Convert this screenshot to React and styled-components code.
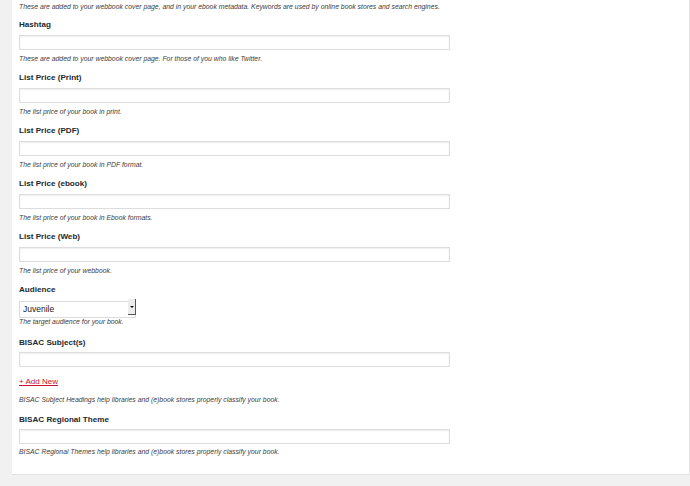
import React from "react";
import styled, { createGlobalStyle } from "styled-components";

const font = `"Liberation Sans", Arial, Helvetica, sans-serif`;

const Global = createGlobalStyle`
  html, body {
    margin: 0;
    padding: 0;
    background: #f1f1f1;
  }
  body {
    font-family: ${font};
    color: #23282d;
  }
`;

const Panel = styled.div`
  box-sizing: border-box;
  width: 678px;
  margin-left: 12px;
  padding: 2px 7px 17px;
  background: #fff;
  border-right: 1px solid #e3e3e3;
  border-bottom: 1px solid #e3e3e3;
`;

const Field = styled.div`
  display: flex;
  flex-direction: column;
  align-items: flex-start;
  margin-top: ${(p) => p.$gap || 7}px;
`;

const Label = styled.label`
  display: block;
  font-size: 8.1px;
  font-weight: bold;
  line-height: 12px;
  color: #23282d;
`;

const TextInput = styled.input`
  box-sizing: border-box;
  display: block;
  width: 431px;
  height: 15px;
  margin: ${(p) => p.$top || 4}px 0 0;
  padding: 0 4px;
  border: 1px solid #ddd;
  box-shadow: inset 0 1px 2px rgba(0, 0, 0, 0.07);
  background: #fff;
  font-family: ${font};
  font-size: 8px;
`;

const Desc = styled.p`
  margin: ${(p) => p.$top ?? 4}px 0 0;
  font-size: 6.85px;
  font-style: italic;
  line-height: 10px;
  color: #3c3c3c;
`;

const SelectWrap = styled.div`
  position: relative;
  margin-top: 2px;
  width: 117px;
  height: 17px;
`;

const Select = styled.select`
  box-sizing: border-box;
  appearance: none;
  width: 100%;
  height: 100%;
  margin: 0;
  padding: 0 0 0 3px;
  border: 1px solid #ddd;
  border-radius: 0;
  background: #fff;
  font-family: ${font};
  font-size: 8.5px;
  color: #222;
  outline: none;
`;

const DropButton = styled.span`
  position: absolute;
  top: 1px;
  right: 0;
  box-sizing: border-box;
  width: 8px;
  height: 16px;
  background: #ececec;
  border-right: 1px solid #555;
  border-bottom: 1px solid #555;
  display: flex;
  align-items: center;
  justify-content: center;
  pointer-events: none;

  &::after {
    content: "";
    border-left: 2px solid transparent;
    border-right: 2px solid transparent;
    border-top: 2px solid #111;
  }
`;

const AddLink = styled.a`
  display: block;
  margin-top: 9px;
  font-size: 8px;
  line-height: 12px;
  color: #c8102e;
  text-decoration: underline;
  cursor: pointer;
`;

const priceFields = [
  { label: "List Price (Print)", desc: "The list price of your book in print." },
  { label: "List Price (PDF)", desc: "The list price of your book in PDF format." },
  { label: "List Price (ebook)", desc: "The list price of your book in Ebook formats." },
  { label: "List Price (Web)", desc: "The list price of your webbook." },
];

export default function App() {
  return (
    <>
      <Global />
      <Panel>
        <Desc $top={0}>
          These are added to your webbook cover page, and in your ebook metadata. Keywords are used by online book stores and search engines.
        </Desc>

        <Field>
          <Label>Hashtag</Label>
          <TextInput type="text" />
          <Desc>These are added to your webbook cover page. For those of you who like Twitter.</Desc>
        </Field>

        {priceFields.map((f) => (
          <Field key={f.label} $gap={8}>
            <Label>{f.label}</Label>
            <TextInput type="text" />
            <Desc>{f.desc}</Desc>
          </Field>
        ))}

        <Field $gap={8}>
          <Label>Audience</Label>
          <SelectWrap>
            <Select defaultValue="juvenile">
              <option value="juvenile">Juvenile</option>
              <option value="young-adult">Young Adult</option>
              <option value="adult">Adult</option>
            </Select>
            <DropButton />
          </SelectWrap>
          <Desc $top={2}>The target audience for your book.</Desc>
        </Field>

        <Field $gap={10}>
          <Label>BISAC Subject(s)</Label>
          <TextInput type="text" $top={3} />
          <AddLink>+ Add New</AddLink>
          <Desc $top={7}>BISAC Subject Headings help libraries and (e)book stores properly classify your book.</Desc>
        </Field>

        <Field $gap={9}>
          <Label>BISAC Regional Theme</Label>
          <TextInput type="text" $top={3} />
          <Desc $top={3}>BISAC Regional Themes help libraries and (e)book stores properly classify your book.</Desc>
        </Field>
      </Panel>
    </>
  );
}
